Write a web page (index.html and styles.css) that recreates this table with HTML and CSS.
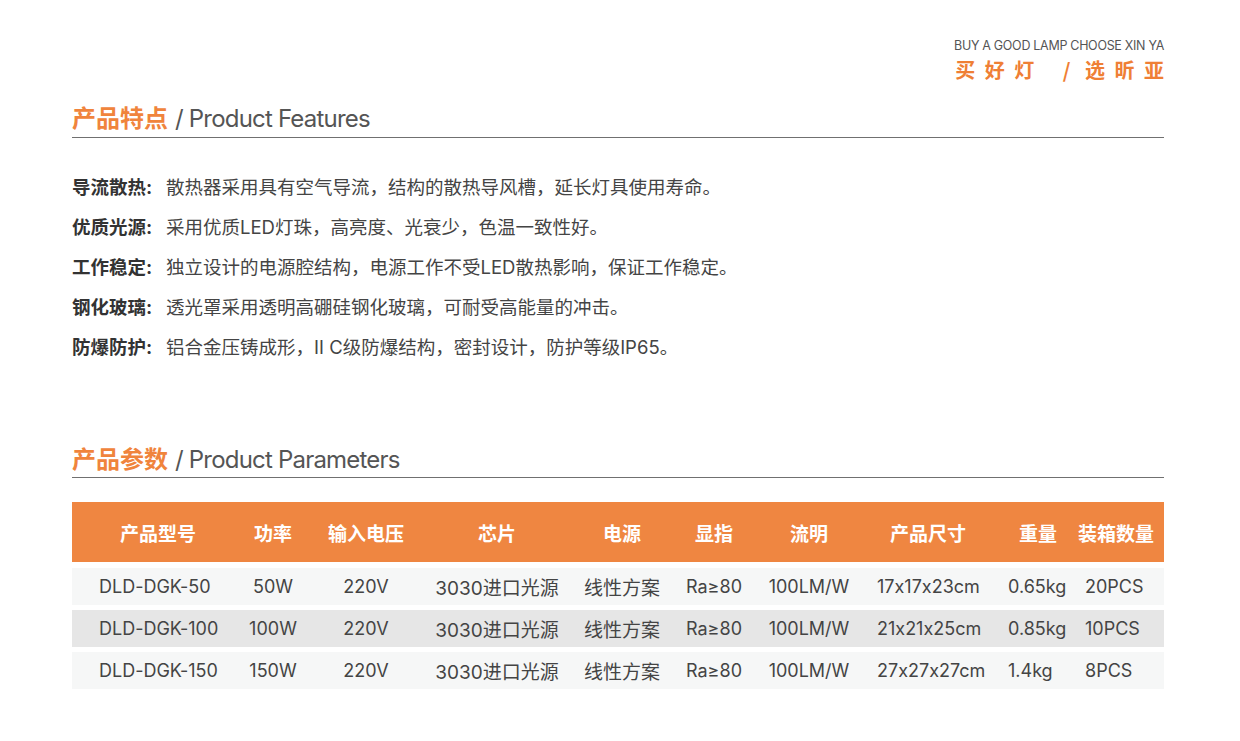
FILE: index.html
```html
<!DOCTYPE html>
<html lang="zh-CN">
<head>
<meta charset="utf-8">
<title>Product</title>
<link rel="stylesheet" href="styles.css">
</head>
<body>
<div class="page">
  <div class="brand">
    <div class="brand-en">BUY A GOOD LAMP CHOOSE XIN YA</div>
    <div class="brand-cn">买好灯<span class="sep">/</span>选昕亚</div>
  </div>

  <h2 class="sec-title sec-features"><span class="cn">产品特点</span><span class="en">/ Product Features</span></h2>
  <ul class="features">
    <li><b>导流散热:</b><span>散热器采用具有空气导流，结构的散热导风槽，延长灯具使用寿命。</span></li>
    <li><b>优质光源:</b><span>采用优质LED灯珠，高亮度、光衰少，色温一致性好。</span></li>
    <li><b>工作稳定:</b><span>独立设计的电源腔结构，电源工作不受LED散热影响，保证工作稳定。</span></li>
    <li><b>钢化玻璃:</b><span>透光罩采用透明高硼硅钢化玻璃，可耐受高能量的冲击。</span></li>
    <li><b>防爆防护:</b><span>铝合金压铸成形，Ⅱ C级防爆结构，密封设计，防护等级IP65。</span></li>
  </ul>

  <h2 class="sec-title sec-params"><span class="cn">产品参数</span><span class="en">/ Product Parameters</span></h2>
  <div class="table">
    <div class="row thead">
      <div class="c c1">产品型号</div><div class="c c2">功率</div><div class="c c3">输入电压</div><div class="c c4">芯片</div><div class="c c5">电源</div><div class="c c6">显指</div><div class="c c7">流明</div><div class="c c8">产品尺寸</div><div class="c c9">重量</div><div class="c c10">装箱数量</div>
    </div>
    <div class="row trow light">
      <div class="c c1">DLD-DGK-50</div><div class="c c2">50W</div><div class="c c3">220V</div><div class="c c4">3030进口光源</div><div class="c c5">线性方案</div><div class="c c6">Ra≥80</div><div class="c c7">100LM/W</div><div class="c c8">17x17x23cm</div><div class="c c9">0.65kg</div><div class="c c10">20PCS</div>
    </div>
    <div class="row trow dark">
      <div class="c c1">DLD-DGK-100</div><div class="c c2">100W</div><div class="c c3">220V</div><div class="c c4">3030进口光源</div><div class="c c5">线性方案</div><div class="c c6">Ra≥80</div><div class="c c7">100LM/W</div><div class="c c8">21x21x25cm</div><div class="c c9">0.85kg</div><div class="c c10">10PCS</div>
    </div>
    <div class="row trow light">
      <div class="c c1">DLD-DGK-150</div><div class="c c2">150W</div><div class="c c3">220V</div><div class="c c4">3030进口光源</div><div class="c c5">线性方案</div><div class="c c6">Ra≥80</div><div class="c c7">100LM/W</div><div class="c c8">27x27x27cm</div><div class="c c9">1.4kg</div><div class="c c10">8PCS</div>
    </div>
  </div>
</div>
</body>
</html>
```

FILE: styles.css
```css
* { box-sizing: border-box; }
html, body { margin: 0; padding: 0; background: #fff; }
body {
  font-family: "Inter", "Noto Sans CJK SC", sans-serif;
  font-feature-settings: "calt" 0;
  color: #333;
}
.page {
  width: 1240px;
  padding: 38px 76px 0 72px;
}
.brand { text-align: right; }
.brand-en {
  font-size: 12.5px;
  line-height: 16px;
  height: 16px;
  color: #555;
  letter-spacing: -0.3px;
}
.brand-cn {
  margin-top: 3px;
  font-family: "Noto Sans CJK SC", sans-serif;
  font-size: 20px;
  line-height: 26px;
  height: 26px;
  font-weight: 700;
  color: #ef7f35;
  letter-spacing: 9.5px;
  margin-right: -9.5px;
}
.brand-cn .sep { margin: 0 5px 0 19px; }
.sec-title {
  margin: 0;
  display: flex;
  align-items: baseline;
  gap: 7px;
  height: 36.5px;
  font-weight: 400;
  font-size: 24px;
  line-height: 32px;
  padding-bottom: 3px;
  border-bottom: 1.5px solid #707070;
}
.sec-features { margin-top: 18px; }
.sec-params { margin-top: 76px; }
.sec-title .cn { color: #f0843c; font-weight: 700; font-family: "Noto Sans CJK SC", sans-serif; }
.sec-title .en { color: #555; letter-spacing: -0.8px; }

.features {
  list-style: none;
  margin: 28px 0 0;
  padding: 0;
}
.features li {
  display: flex;
  height: 40px;
  align-items: center;
  font-size: 18.5px;
  color: #444;
}
.features b {
  font-weight: 700;
  color: #333;
  width: 94px;
  flex: none;
}

.table { margin-top: 24px; }
.row {
  display: grid;
  grid-template-columns: 160px 82px 104px 158px 92px 92px 98px 140px 72px 94px;
  align-items: center;
  white-space: nowrap;
}
.thead {
  height: 60px;
  background: #ef8641;
  color: #fff;
  font-size: 19px;
  font-weight: 700;
}
.trow {
  height: 37px;
  margin-top: 5px;
  font-size: 18px;
  color: #444;
}
.trow .c4, .trow .c5 { font-size: 19px; }
.thead + .trow { margin-top: 6px; }
.light { background: #f6f7f7; }
.dark { background: #e6e6e6; }
.c { text-align: center; }
.thead .c1 { text-align: left; padding-left: 48px; }
.trow .c1 { text-align: left; padding-left: 27px; }
.trow .c8 { text-align: left; padding-left: 19px; }
.c9 { text-align: left; }
.thead .c9 { padding-left: 21px; }
.trow .c9 { padding-left: 10px; }
.c10 { text-align: left; }
.thead .c10 { padding-left: 8px; }
.trow .c10 { padding-left: 15px; }
```
